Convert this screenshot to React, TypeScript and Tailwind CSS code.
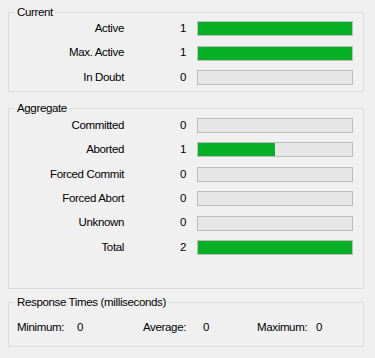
import React from "react";

type Row = { label: string; value: number; pct: number };

const current: Row[] = [
  { label: "Active", value: 1, pct: 100 },
  { label: "Max. Active", value: 1, pct: 100 },
  { label: "In Doubt", value: 0, pct: 0 },
];

const aggregate: Row[] = [
  { label: "Committed", value: 0, pct: 0 },
  { label: "Aborted", value: 1, pct: 50 },
  { label: "Forced Commit", value: 0, pct: 0 },
  { label: "Forced Abort", value: 0, pct: 0 },
  { label: "Unknown", value: 0, pct: 0 },
  { label: "Total", value: 2, pct: 100 },
];

// Windows style progress bar
function Bar({ pct }: { pct: number }) {
  return (
    <div className="ml-[7px] h-[15px] w-[156px] border border-[#bcbcbc] bg-[#e6e6e6]">
      <div className="h-full bg-[#06b025]" style={{ width: pct + "%" }} />
    </div>
  );
}

function StatRow({ row }: { row: Row }) {
  return (
    <div className="flex h-[15px] items-center">
      <div className="w-[115px] text-right">{row.label}</div>
      <div className="ml-[56px] w-[10px]">{row.value}</div>
      <Bar pct={row.pct} />
    </div>
  );
}

function Group({ title, className, children }: { title: string; className: string; children: React.ReactNode }) {
  return (
    <fieldset className={"mx-[8px] w-[356px] border border-[#dcdcdc] " + className}>
      <legend className="ml-[6px] px-[2px] leading-[13px]">{title}</legend>
      {children}
    </fieldset>
  );
}

export default function App() {
  return (
    <div
      className="h-[358px] w-[375px] overflow-hidden bg-[#f0f0f0] pt-[5.5px] text-[11.5px] tracking-[-0.35px] text-black"
      style={{ fontFamily: '"Liberation Sans", Arial, sans-serif' }}
    >
      {/* Current */}
      <Group title="Current" className="pb-[6px] pt-[2.5px]">
        <div className="flex flex-col gap-y-[9.5px]">
          {current.map((r) => (
            <StatRow key={r.label} row={r} />
          ))}
        </div>
      </Group>

      {/* Aggregate */}
      <Group title="Aggregate" className="mt-[9.5px] pb-[33px] pt-[3.5px]">
        <div className="flex flex-col gap-y-[9.4px]">
          {aggregate.map((r) => (
            <StatRow key={r.label} row={r} />
          ))}
        </div>
      </Group>

      {/* Response times */}
      <Group title="Response Times (milliseconds)" className="mt-[7.5px] pb-[11.5px] pt-[12px]">
        <div className="flex h-[13px] items-center">
          <div className="ml-[8px] w-[60px]">Minimum:</div>
          <div className="w-[66px]">0</div>
          <div className="w-[60px]">Average:</div>
          <div className="w-[54px]">0</div>
          <div className="w-[59px]">Maximum:</div>
          <div>0</div>
        </div>
      </Group>
    </div>
  );
}
